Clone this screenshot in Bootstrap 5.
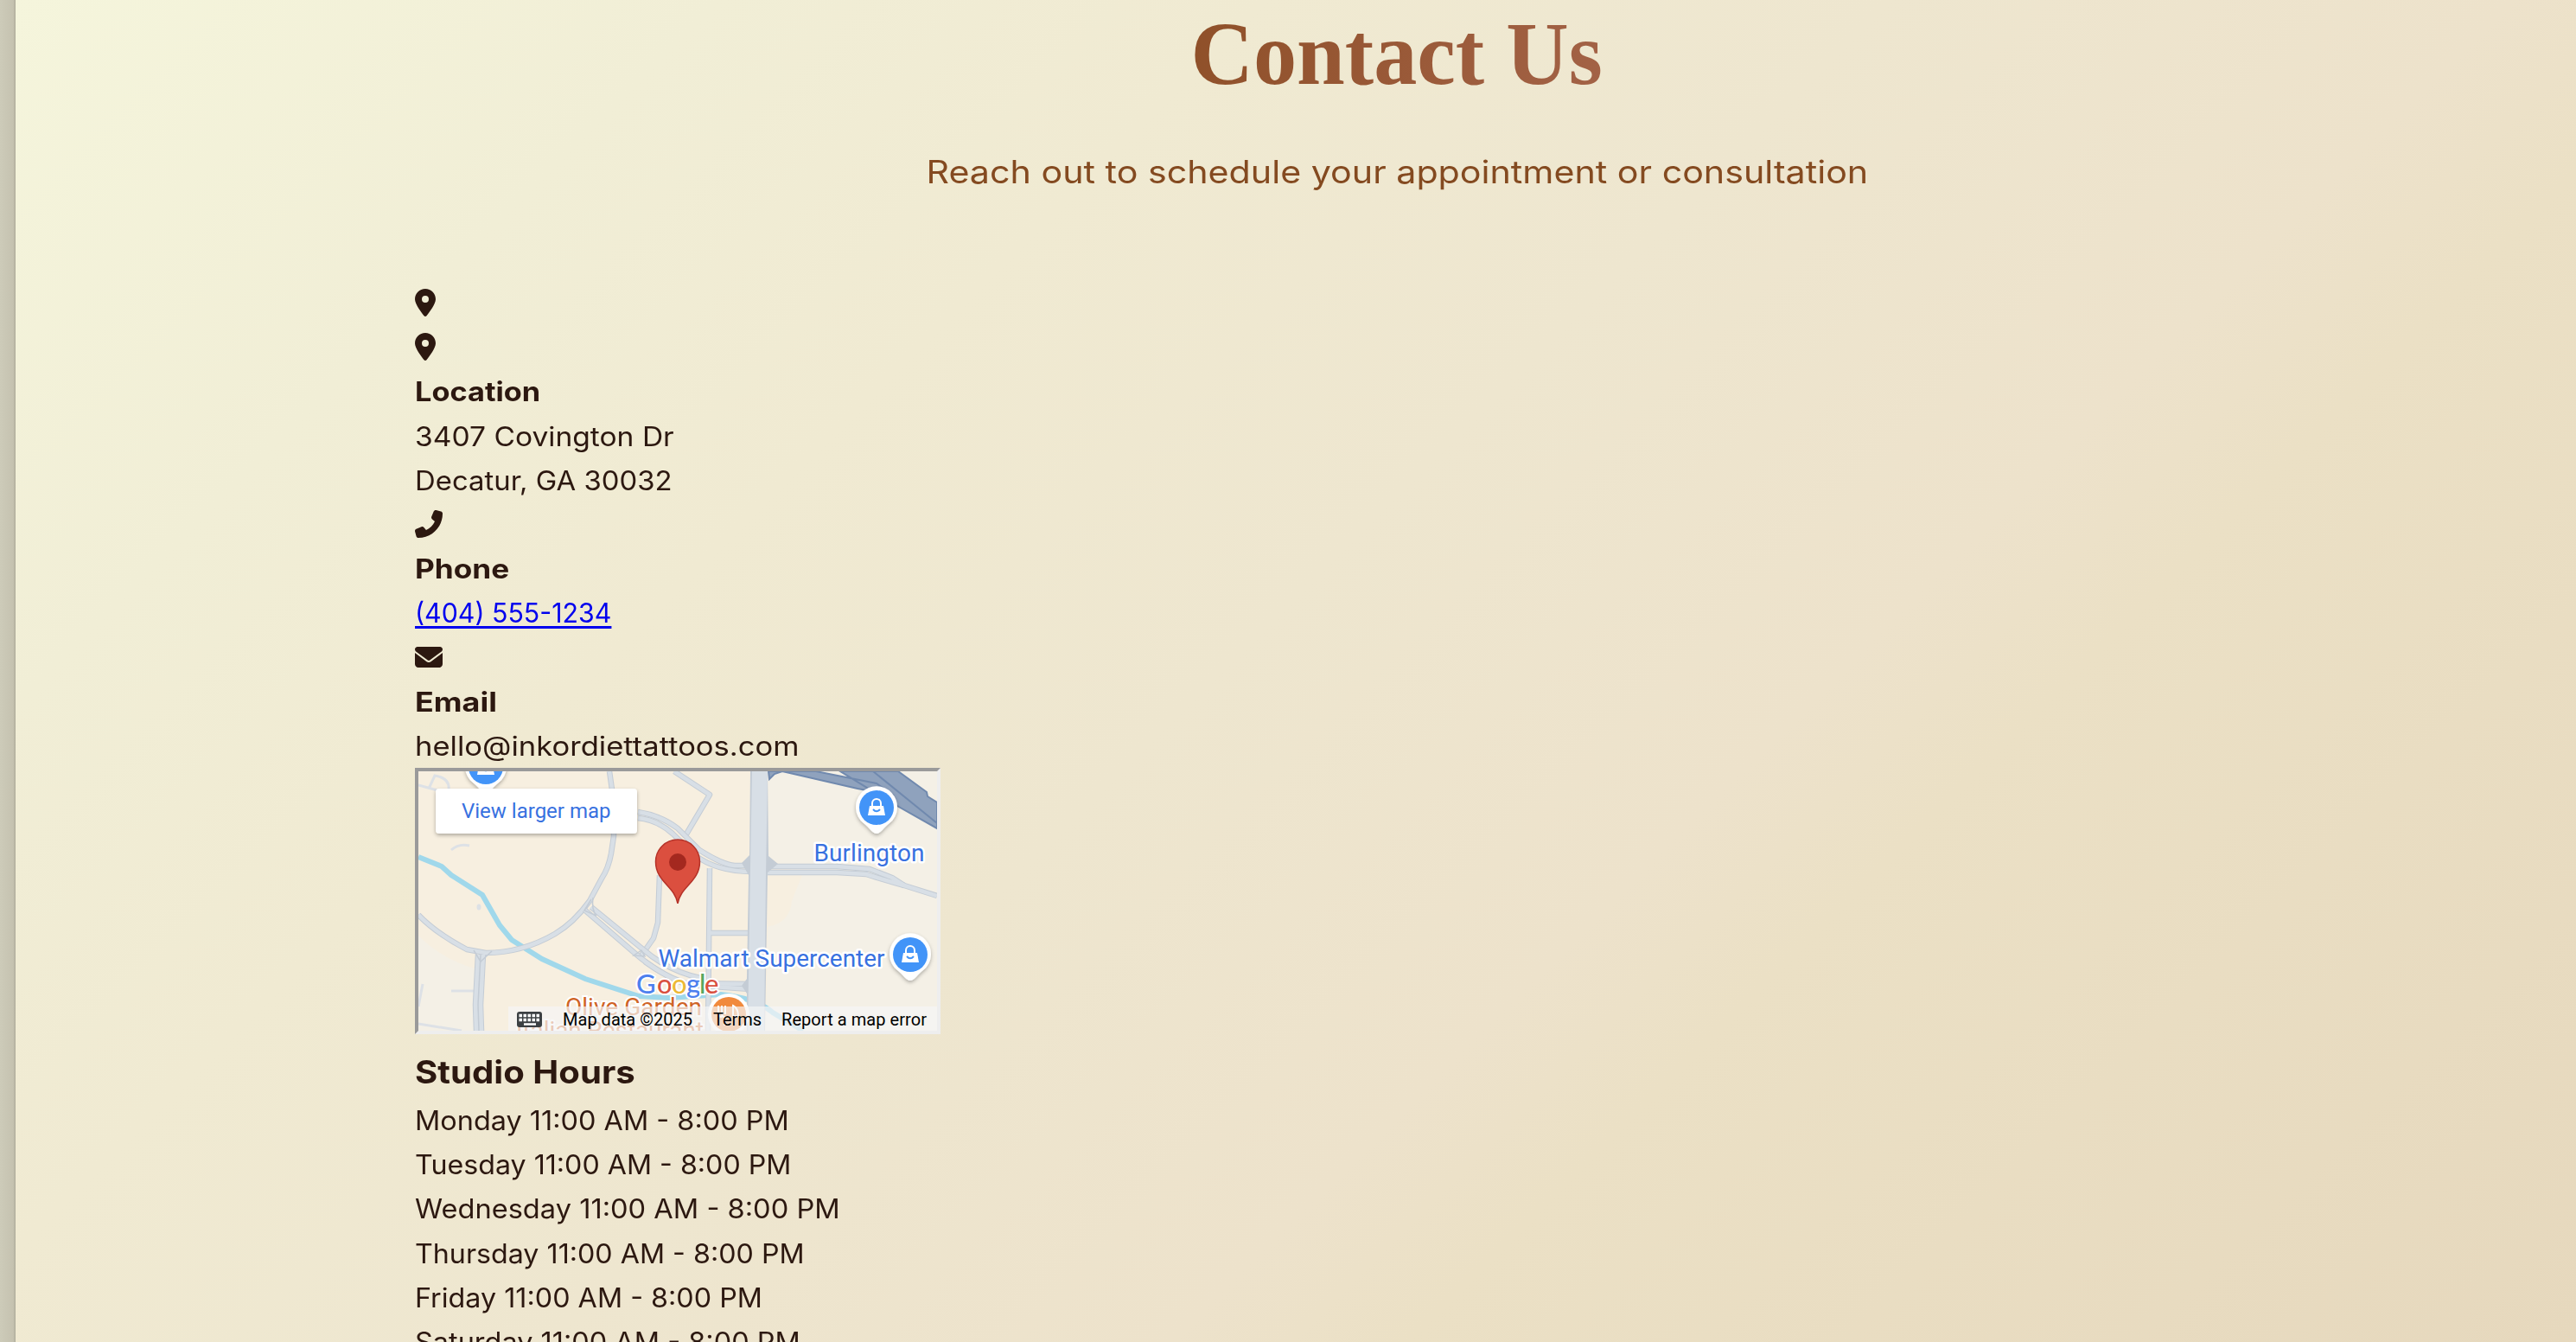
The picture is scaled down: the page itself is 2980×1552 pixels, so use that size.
<!DOCTYPE html>
<html lang="en">
<head>
<meta charset="utf-8">
<title>Contact Us</title>
<link rel="stylesheet" href="https://cdn.jsdelivr.net/npm/bootstrap@5.3.0/dist/css/bootstrap.min.css">
<style>
body{font-family:Inter,"Open Sans",sans-serif;font-size:31px;line-height:51.2px;color:#2c1810;background:#c7c6b3;height:1552px;overflow:hidden}
.edge{width:18px;flex:none;background:linear-gradient(90deg,#cdcbb9,#c5c2b0 85%,#aeab9a)}
.page-bg{background:linear-gradient(135deg,#f5f5dc 0%,#f1eed6 18%,#f0ead2 32%,#eee6cf 48%,#ede2cb 64%,#ebe0c5 70%,#e6d8bd 100%);height:1552px;overflow:hidden}
.inner{margin-left:462px;width:2272px}
.fit{display:inline-block;white-space:nowrap;transform-origin:0 50%}
.hero-title{font-family:"Liberation Serif",serif;font-weight:700;font-size:103px;line-height:120px;padding-top:2px;margin:0;height:159px}
.hero-title .fit{background:linear-gradient(100deg,#8f5029,#a36246);-webkit-background-clip:text;background-clip:text;color:transparent}
.hero-sub{font-size:37px;line-height:61px;color:#844a20;margin:0;height:166px;padding-top:9px}
.line{height:51.2px}
.icon-line{padding-top:9px}
.line svg{display:block}
.tel{color:#00e;text-decoration:underline;text-decoration-thickness:3px;text-underline-offset:4px}
.map-frame{width:608px;height:308px;border:4px solid;border-color:#9a9a9a #eee #eee #9a9a9a;overflow:hidden}
.map-frame svg{display:block}
.hours-title{font-size:37px;font-weight:700;line-height:59.9px;margin:14px 0 0}
</style>
<script src="https://cdn.jsdelivr.net/npm/bootstrap@5.3.0/dist/js/bootstrap.bundle.min.js"></script>
</head>
<body>
<div class="d-flex">
<div class="edge"></div>
<main class="page-bg flex-grow-1">
<div class="inner">
<h1 class="hero-title text-center"><span class="fit" data-w="476">Contact Us</span></h1>
<p class="hero-sub text-center"><span class="fit" data-w="1090">Reach out to schedule your appointment or consultation</span></p>
<div class="line icon-line"><svg width="24" height="32" viewBox="0 0 384 512" fill="#2c1810"><path d="M215.700 499.200C267 435 384 279.400 384 192 384 86 298 0 192 0S0 86 0 192c0 87.400 117 243 168.300 307.200 12.300 15.300 35.100 15.300 47.400 0zM192 128a64 64 0 1 1 0 128 64 64 0 1 1 0-128z"/></svg></div>
<div class="line icon-line"><svg width="24" height="32" viewBox="0 0 384 512" fill="#2c1810"><path d="M215.700 499.200C267 435 384 279.400 384 192 384 86 298 0 192 0S0 86 0 192c0 87.400 117 243 168.300 307.200 12.300 15.300 35.100 15.300 47.400 0zM192 128a64 64 0 1 1 0 128 64 64 0 1 1 0-128z"/></svg></div>
<div class="line"><b class="fit" data-w="145">Location</b></div>
<div class="line"><span class="fit" data-w="300">3407 Covington Dr</span></div>
<div class="line"><span class="fit" data-w="298">Decatur, GA 30032</span></div>
<div class="line icon-line"><svg width="32" height="32" viewBox="0 0 512 512" fill="#2c1810"><path transform="matrix(-1 0 0 1 512 0)" d="M164.900 24.600c-7.700-18.600-28-28.500-47.400-23.200l-88 24C12.100 30.200 0 46 0 64c0 247.400 200.600 448 448 448 18 0 33.800-12.100 38.600-29.500l24-88c5.300-19.400-4.600-39.700-23.200-47.400l-96-40c-16.300-6.800-35.200-2.100-46.300 11.600L304.700 368C234.300 334.700 177.300 277.700 144 207.300L193.300 167c13.700-11.200 18.400-30 11.600-46.300l-40-96z"/></svg></div>
<div class="line"><b class="fit" data-w="109">Phone</b></div>
<div class="line"><a class="fit tel" href="#" data-w="227">(404) 555-1234</a></div>
<div class="line icon-line"><svg width="32" height="32" viewBox="0 0 512 512" fill="#2c1810"><path d="M48 64C21.500 64 0 85.500 0 112c0 15.100 7.100 29.300 19.200 38.400l217.600 163.200c11.400 8.500 27 8.500 38.400 0l217.600-163.200c12.100-9.100 19.200-23.300 19.200-38.400 0-26.500-21.500-48-48-48zM0 176v208c0 35.300 28.700 64 64 64h384c35.300 0 64-28.700 64-64V176L294.400 339.200c-22.800 17.100-54 17.100-76.800 0z"/></svg></div>
<div class="line"><b class="fit" data-w="95">Email</b></div>
<div class="line"><span class="fit" data-w="445">hello@inkordiettattoos.com</span></div>
<div class="map-frame">
<svg width="600" height="300" viewBox="0 0 600 300" font-family="Roboto,sans-serif">
<defs>
<filter id="sh" x="-20%" y="-20%" width="140%" height="150%"><feDropShadow dx="0" dy="2" stdDeviation="2" flood-opacity=".3"/></filter>
<g id="bag"><path d="M0 30C-5 30-8 23-15 18A24 24 0 1 1 15 18C8 23 5 30 0 30Z" fill="#fff" filter="url(#sh)"/><circle r="20" fill="#4294f8"/><path d="M-8-2H8L10 9H-10Z" fill="#fff"/><path d="M-5-1V-5a5 5 0 0 1 10 0V-1" fill="none" stroke="#fff" stroke-width="2"/><path d="M-4 2q4 4.500 8 0" fill="none" stroke="#4294f8" stroke-width="2"/></g>
<g id="roads" fill="none" stroke-linejoin="round">
<path d="M221 0L226 35V75L223 95Q220 112 212 124L198 150Q180 175 158 188Q120 210 78 210L56 206Q20 187 0 166"/>
<path d="M279 120L277 175L272 193L258 213"/>
<path d="M296 0L337 27L308 76M337 112L335 300M336 187H382"/>
</g>
<g id="lanes" fill="none" stroke-linejoin="round">
<path d="M192 160L250 210Q280 236 310 245L384 246"/>
<path d="M200 157L260 206Q290 232 330 240"/>
<path d="M262 220Q290 240 312 247L384 252"/>
<path d="M254 47Q280 51 300 66L325 91Q352 108 366 109H386"/>
<path d="M254 54Q276 56 294 72L320 97Q345 116 386 116"/>
<path d="M404 110H484L522 113L548 123L562 132L600 144"/>
<path d="M404 117H484L518 119Q540 126 562 132"/>
<path d="M69 212L66 270L67 300M75 212L72 270L73 300"/>
</g>
</defs>
<rect width="600" height="300" fill="#f7efe0"/>
<path d="M404 0H600V300H402L404 180Q430 175 432 150L444 120L404 100ZM0 190Q30 220 72 230V300H0Z" fill="#f4f0e6"/>
<path d="M0 99L27 110L38 120L74 143L94 178L108 195L143 217L193 240L255 260L290 262L350 258Q390 262 410 279L445 300" fill="none" stroke="#a0d8eb" stroke-width="6"/>
<g fill="none" stroke="#dde1e6" stroke-width="3"><path d="M0 16L22 22M12 20L19 5Q37 8 35 22M38 91Q47 83 59 86M38 254H66M0 272L5 246M0 292L50 300"/><ellipse cx="70" cy="157" rx="1" ry="2"/></g>
<use href="#roads" stroke="#c4ccd5" stroke-width="6.500"/><use href="#roads" stroke="#d8dfe6" stroke-width="4.500"/>
<use href="#lanes" stroke="#c4ccd5" stroke-width="6.500"/><use href="#lanes" stroke="#d8dfe6" stroke-width="4.500"/>
<path d="M200 148L192 161L206 167Q200 160 202 146M64 207L72 220L85 208M249 213L258 207L262 214Z" fill="none" stroke="#c4ccd5" stroke-width="1.500"/>
<path d="M384 0L383 97L374 106L382 120L380 240L374 248L380 257V300H401L404 117L416 107L405 98L404 0Z" fill="#c4ccd5"/><path d="M386 0L384 110L381 300H400L402 120L404 0Z" fill="#d8dfe6"/>
<path d="M405 0H421L412 3L406 9ZM421 0H460L530 14L550 28L508 20ZM488 0H555L588 24L589 29L600 36V66L545 35Z" fill="#8fa2bd" stroke="#7089ae" stroke-width="2"/>
<path d="M526 0L600 60" stroke="#7089ae" stroke-width="2"/>
<use href="#bag" x="78" y="-5"/><use href="#bag" x="530" y="42"/><use href="#bag" x="569" y="212"/>
<g fill="#3871e0" stroke="#fff" stroke-width="5" paint-order="stroke" stroke-linejoin="round">
<text x="457.500" y="104" font-size="28" textLength="128">Burlington</text>
<text x="277.500" y="226" font-size="28" textLength="262">Walmart Supercenter</text></g>
<g font-size="28" fill="#cf6427" stroke="#fff" stroke-width="4" paint-order="stroke"><text x="170" y="282" textLength="158">Olive Garden</text><text x="113" y="309" textLength="217">Italian Restaurant</text></g>
<circle cx="359" cy="281" r="24" fill="#fff"/><circle cx="359" cy="281" r="20" fill="#f18a3d"/><path d="M351 271v9q0 4 3 4v10M347 271v9q0 4 4 4M355 271v10M364 294V271q6 3 6 12h-6" stroke="#fff" stroke-width="2" fill="none"/>
<path d="M300 153C297 133 274.500 128 274.500 104.500A25.500 25.500 0 0 1 325.500 104.500C325.500 128 303 133 300 153Z" fill="#db4f3f" stroke="#b53228" stroke-width="1.500"/><circle cx="300" cy="105" r="10" fill="#a4281f"/>
<g font-family="Lato,sans-serif" font-size="31" font-weight="500" stroke="#fff" stroke-width="4" paint-order="stroke"><text y="257"><tspan x="252" fill="#4d80ee">G</tspan><tspan x="276" fill="#d9503f">o</tspan><tspan x="293" fill="#edb936">o</tspan><tspan x="310" fill="#4d80ee">g</tspan><tspan x="325" fill="#58a65c">l</tspan><tspan x="331" fill="#d9503f">e</tspan></text></g>
<rect x="104" y="272" width="496" height="28" fill="#f5f5f5" opacity=".7"/>
<rect x="114" y="278" width="29" height="18" rx="3" fill="#3c4043"/><path d="M116.500 282.500h24M116.500 287.500h24" stroke="#fff" stroke-width="3.500" stroke-dasharray="3.500 1.500"/><path d="M122 292.500h14" stroke="#fff" stroke-width="2.500"/>
<g font-size="20" fill="#000"><text x="167" y="294" textLength="150">Map data ©2025</text><text x="341" y="294" textLength="56">Terms</text><text x="420" y="294" textLength="168">Report a map error</text></g>
<rect x="20" y="20" width="233" height="52" rx="4" fill="#fff" filter="url(#sh)"/><text x="50" y="54" font-size="24" fill="#3871e0" textLength="172.500">View larger map</text>
</svg>
</div>
<h3 class="hours-title"><span class="fit" data-w="255">Studio Hours</span></h3>
<div class="line"><span class="fit" data-w="433">Monday 11:00 AM - 8:00 PM</span></div>
<div class="line"><span class="fit" data-w="435">Tuesday 11:00 AM - 8:00 PM</span></div>
<div class="line"><span class="fit" data-w="492">Wednesday 11:00 AM - 8:00 PM</span></div>
<div class="line"><span class="fit" data-w="451">Thursday 11:00 AM - 8:00 PM</span></div>
<div class="line"><span class="fit" data-w="402">Friday 11:00 AM - 8:00 PM</span></div>
<div class="line"><span class="fit" data-w="446">Saturday 11:00 AM - 8:00 PM</span></div>
</div>
</main>
</div>
<script>
// Stretch each line of text to its set measure.
document.querySelectorAll('.fit').forEach(function(e){
  var w=e.offsetWidth,t=+e.dataset.w;
  if(e.closest('.text-center'))e.style.transformOrigin='50% 50%';
  e.style.transform='scaleX('+t/w+')';
});
</script>
</body>
</html>
